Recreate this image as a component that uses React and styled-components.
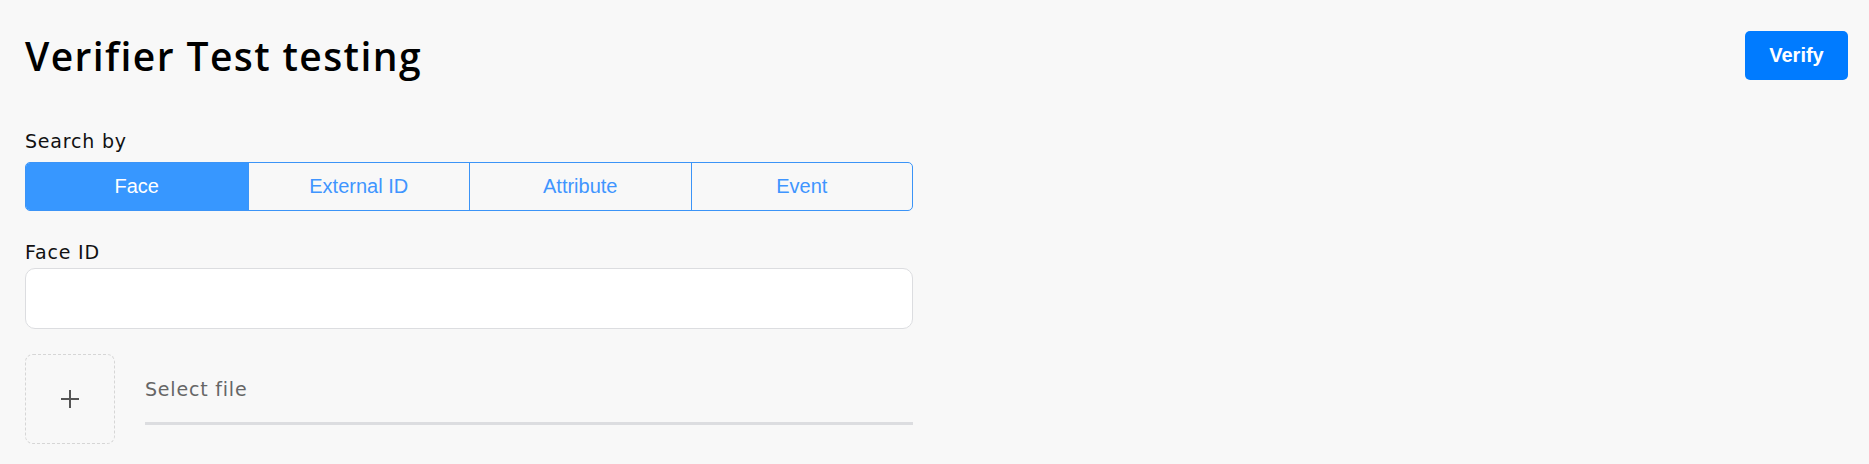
import React, { useState } from "react";
import styled, { createGlobalStyle } from "styled-components";

const GlobalStyle = createGlobalStyle`
  body {
    margin: 0;
    background: #f8f8f8;
    font-family: "DejaVu Sans", "Open Sans", sans-serif;
  }
`;

const Page = styled.div`
  padding: 31px 21px 20px 25px;
`;

const Header = styled.div`
  display: flex;
  justify-content: space-between;
  align-items: center;
  height: 49px;
`;

const Title = styled.h1`
  margin: 0;
  font-family: "Open Sans", sans-serif;
  font-size: 39px;
  font-weight: 600;
  color: #000;
  letter-spacing: 1.4px;
`;

const VerifyButton = styled.button`
  width: 103px;
  height: 49px;
  border: none;
  border-radius: 5px;
  background: #007bff;
  color: #fff;
  font-family: "Liberation Sans", Arial, sans-serif;
  font-size: 20px;
  font-weight: 700;
  cursor: pointer;
`;

const Form = styled.div`
  width: 888px;
  margin-top: 50px;
`;

const Label = styled.div`
  font-size: 19px;
  line-height: 23px;
  letter-spacing: 0.8px;
  color: #111;
  margin-bottom: ${({ gap }) => gap}px;
`;

const Segments = styled.div`
  display: grid;
  grid-template-columns: repeat(4, 1fr);
  height: 49px;
  border: 1px solid #3b94f7;
  border-radius: 5px;
  overflow: hidden;
  box-sizing: border-box;
  margin-bottom: 30px;
`;

const Segment = styled.button`
  border: none;
  border-left: ${({ first }) => (first ? "none" : "1px solid #3b94f7")};
  background: ${({ active }) => (active ? "#3797ff" : "transparent")};
  color: ${({ active }) => (active ? "#fff" : "#3f95ff")};
  font-family: "Liberation Sans", Arial, sans-serif;
  font-size: 20px;
  cursor: pointer;
  padding: 0;
`;

const Input = styled.input`
  display: block;
  width: 100%;
  height: 61px;
  box-sizing: border-box;
  border: 1px solid #dcdde0;
  border-radius: 10px;
  background: #fff;
  outline: none;
  padding: 0 16px;
  font-size: 18px;
`;

const UploadRow = styled.div`
  display: flex;
  align-items: flex-start;
  gap: 30px;
  margin-top: 25px;
`;

const UploadBox = styled.div`
  width: 90px;
  height: 90px;
  box-sizing: border-box;
  border: 1px dashed #d6d6d6;
  border-radius: 8px;
  display: flex;
  align-items: center;
  justify-content: center;
  flex-shrink: 0;
`;

const FileField = styled.div`
  flex: 1;
  padding-top: 24px;
`;

const FileText = styled.div`
  font-size: 19px;
  line-height: 23px;
  letter-spacing: 0.8px;
  color: #666;
  margin-bottom: 21px;
`;

const FileLine = styled.div`
  height: 3px;
  background: #dcdde0;
`;

export default function App() {
  const [mode, setMode] = useState("Face");
  const tabs = ["Face", "External ID", "Attribute", "Event"];

  return (
    <Page>
      <GlobalStyle />
      <Header>
        <Title>Verifier Test testing</Title>
        <VerifyButton>Verify</VerifyButton>
      </Header>
      <Form>
        <Label gap={9}>Search by</Label>
        <Segments>
          {tabs.map((t, i) => (
            <Segment
              key={t}
              first={i === 0}
              active={mode === t}
              onClick={() => setMode(t)}
            >
              {t}
            </Segment>
          ))}
        </Segments>
        <Label gap={4}>Face ID</Label>
        <Input />
        <UploadRow>
          <UploadBox>
            <svg width="22" height="22" viewBox="0 0 22 22">
              <path d="M11 2v18M2 11h18" stroke="#555" strokeWidth="2" />
            </svg>
          </UploadBox>
          <FileField>
            <FileText>Select file</FileText>
            <FileLine />
          </FileField>
        </UploadRow>
      </Form>
    </Page>
  );
}
